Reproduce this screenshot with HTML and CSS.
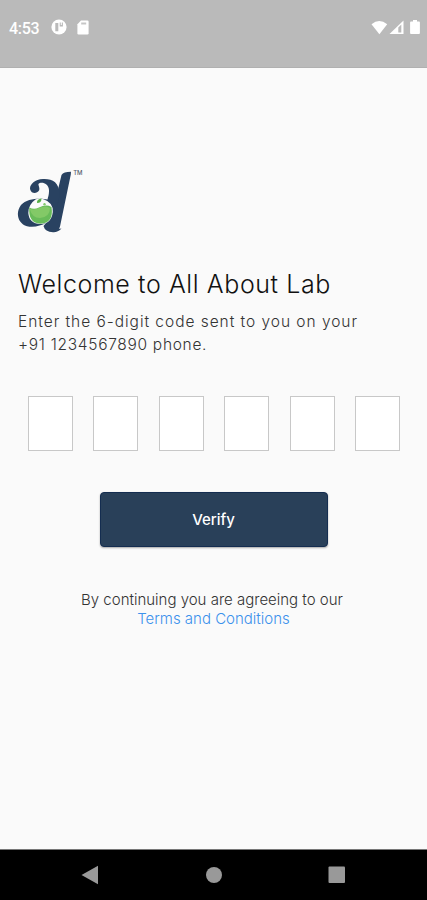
FILE: index.html
```html
<!DOCTYPE html>
<html lang="en">
<head>
<meta charset="utf-8">
<meta name="viewport" content="width=device-width, initial-scale=1">
<title>All About Lab</title>
<link rel="stylesheet" href="styles.css">
</head>
<body>
<header class="status">
  <span class="time">4:53</span>
  <svg class="app-icon" width="16" height="16" viewBox="0 0 16 16"><circle cx="8" cy="8" r="7.6" fill="#fff"/><path d="M4.3 4h3v8.2h-3zM8.7 3.4h3.2v4.2H8.7z" fill="#bababa"/><path d="M9.8 3h1v3h-1z" fill="#fff"/></svg>
  <svg class="sd-icon" width="12" height="15" viewBox="0 0 12 15"><path d="M4 .5h6.4q1.2 0 1.2 1.2v11.6q0 1.2-1.2 1.2H1.6q-1.2 0-1.2-1.2V4.2z" fill="#fff"/><path d="M4.2 2.5h5v2h-5z" fill="#c6c6c6"/></svg>
  <svg class="signals" width="50" height="16" viewBox="0 0 50 16"><path d="M.5 4.2Q8.3-2.2 16.2 4.2L8.4 14.3z" fill="#fff"/><path d="M18.5 14L32.5.5V14z" fill="#fff"/><path d="M27.3 7.5l3-3V12.5h-3z" fill="#bababa"/><path d="M40 1.5h2V0h4v1.5h2q.9 0 .9.9v10.7q0 .9-.9.9h-8q-.9 0-.9-.9V2.4q0-.9.9-.9z" fill="#fff"/></svg>
</header>
<main>
  <svg class="logo" width="70" height="68" viewBox="0 0 70 68" role="img" aria-label="All About Lab">
    <path d="M45.5 7Q47.5 3.7 55 3.7L54.8 6.5L44 58.5Q42.5 61.7 44 60.8L45.5 60.5Q41.5 64.6 37 64.2Q29 64 27.5 58L32.5 52L38 38z" fill="#294261"/>
    <path d="M43.5 28C44 14 36 10.5 27 11C18 11.2 13 17.5 14.2 21.5C15.3 26 21 26 23 22.5C24.2 19.5 22 17.5 22.5 16C24 13.5 32.5 14 33 22C33.2 27 32 29 31.5 31.5C25 30 11 30 5 37C-1 45 2 56 11 58.2C18 60 25 57.5 30 55L40 43z" fill="#294261"/>
    <path d="M19.5 31.5Q23 29.5 27.5 31.2Q37.5 34.5 36.8 44Q35.5 55.8 24.5 56Q13 55.5 12.3 45Q12.2 36.5 19.5 31.5z" fill="#fafafa"/>
    <path d="M13.3 39.5Q18 42 23 39.5Q30 36 35.5 39Q38 55 24.5 55.8Q12 55 13.3 39.5z" fill="#68bb59"/>
    <path d="M13.6 40.5Q18 42.5 23 40Q30 37 34 40Q34 49 24 50Q16 50 13.6 40.5z" fill="#83c967"/>
    <path d="M21 35Q20.5 31 25.5 30.5Q25.5 35 21 35z" fill="#55ae46"/><circle cx="28.5" cy="36.3" r="1.2" fill="#82c86b"/>
    <text class="tm" x="57.2" y="6.7">TM</text>
  </svg>
  <h1>Welcome to All About Lab</h1>
  <p class="intro"><span class="line1">Enter the 6-digit code sent to you on your</span><br><span class="line2">+91 1234567890 phone.</span></p>
  <div class="code"><input aria-label="Digit 1"><input aria-label="Digit 2"><input aria-label="Digit 3"><input aria-label="Digit 4"><input aria-label="Digit 5"><input aria-label="Digit 6"></div>
  <button>Verify</button>
  <p class="terms"><span class="agree">By continuing you are agreeing to our</span><br><a>Terms and Conditions</a></p>
</main>
<nav>
  <svg width="18" height="20" viewBox="0 0 18 20"><path d="M.5 10L17 .7v18.6z" fill="#999"/></svg>
  <svg width="18" height="18" viewBox="0 0 18 18"><circle cx="9" cy="9" r="8" fill="#999"/></svg>
  <svg width="18" height="18" viewBox="0 0 18 18"><rect x=".5" y=".5" width="16.5" height="16.5" rx="1" fill="#999"/></svg>
</nav>
</body>
</html>
```
FILE: styles.css
```css
* { box-sizing: border-box; }
body { margin: 0; height: 900px; display: flex; flex-direction: column; overflow: hidden; background: #fafafa; font-family: Inter, sans-serif; }
.status { height: 68px; flex: none; background: #bababa; border-bottom: 1px solid #b0b0b0; display: flex; align-items: flex-start; padding: 20px 6px 0 9px; color: #fff; }
.time { width: 42px; font: 500 16px/18px Roboto, sans-serif; letter-spacing: -.3px; }
.app-icon { margin-top: -1px; }
.sd-icon { margin-left: 10px; }
.signals { margin-left: auto; }
main { flex: 1; padding: 100px 18px 0; display: flex; flex-direction: column; }
.logo { margin-left: -2px; flex: none; }
.tm { font: 500 6px Inter, sans-serif; fill: #555f6d; }
h1 { margin: 32px 0 0; font-size: 25px; line-height: 32px; font-weight: 300; letter-spacing: .59px; color: #111; white-space: nowrap; }
.intro { margin: 10px 0 0; font-size: 15.5px; line-height: 23px; font-weight: 300; color: #333; white-space: nowrap; }
.line1 { letter-spacing: .96px; }
.line2 { letter-spacing: .7px; }
.code { display: flex; justify-content: space-between; margin: 40px 0 0 10px; width: 372px; }
.code input { width: 45px; height: 55px; padding: 0; border: 1px solid #c8c8c8; border-radius: 0; background: #fff; }
button { align-self: center; width: 228px; height: 55px; margin-top: 41px; border: 1px solid #142d50; border-radius: 4px; background: #294059; color: #fff; font: 500 15px/20px Inter, sans-serif; box-shadow: 0 1px 2px #0005; padding: 0; }
.terms { margin: 43px 3px 0 0; text-align: center; font-size: 15px; line-height: 19px; font-weight: 300; color: #333; }
.terms a { margin-left: 3px; color: #3b91ec; }
nav { height: 51px; flex: none; background: #000; border-top: 1px solid #777; display: flex; justify-content: space-between; align-items: center; padding: 0 81px; }
```
